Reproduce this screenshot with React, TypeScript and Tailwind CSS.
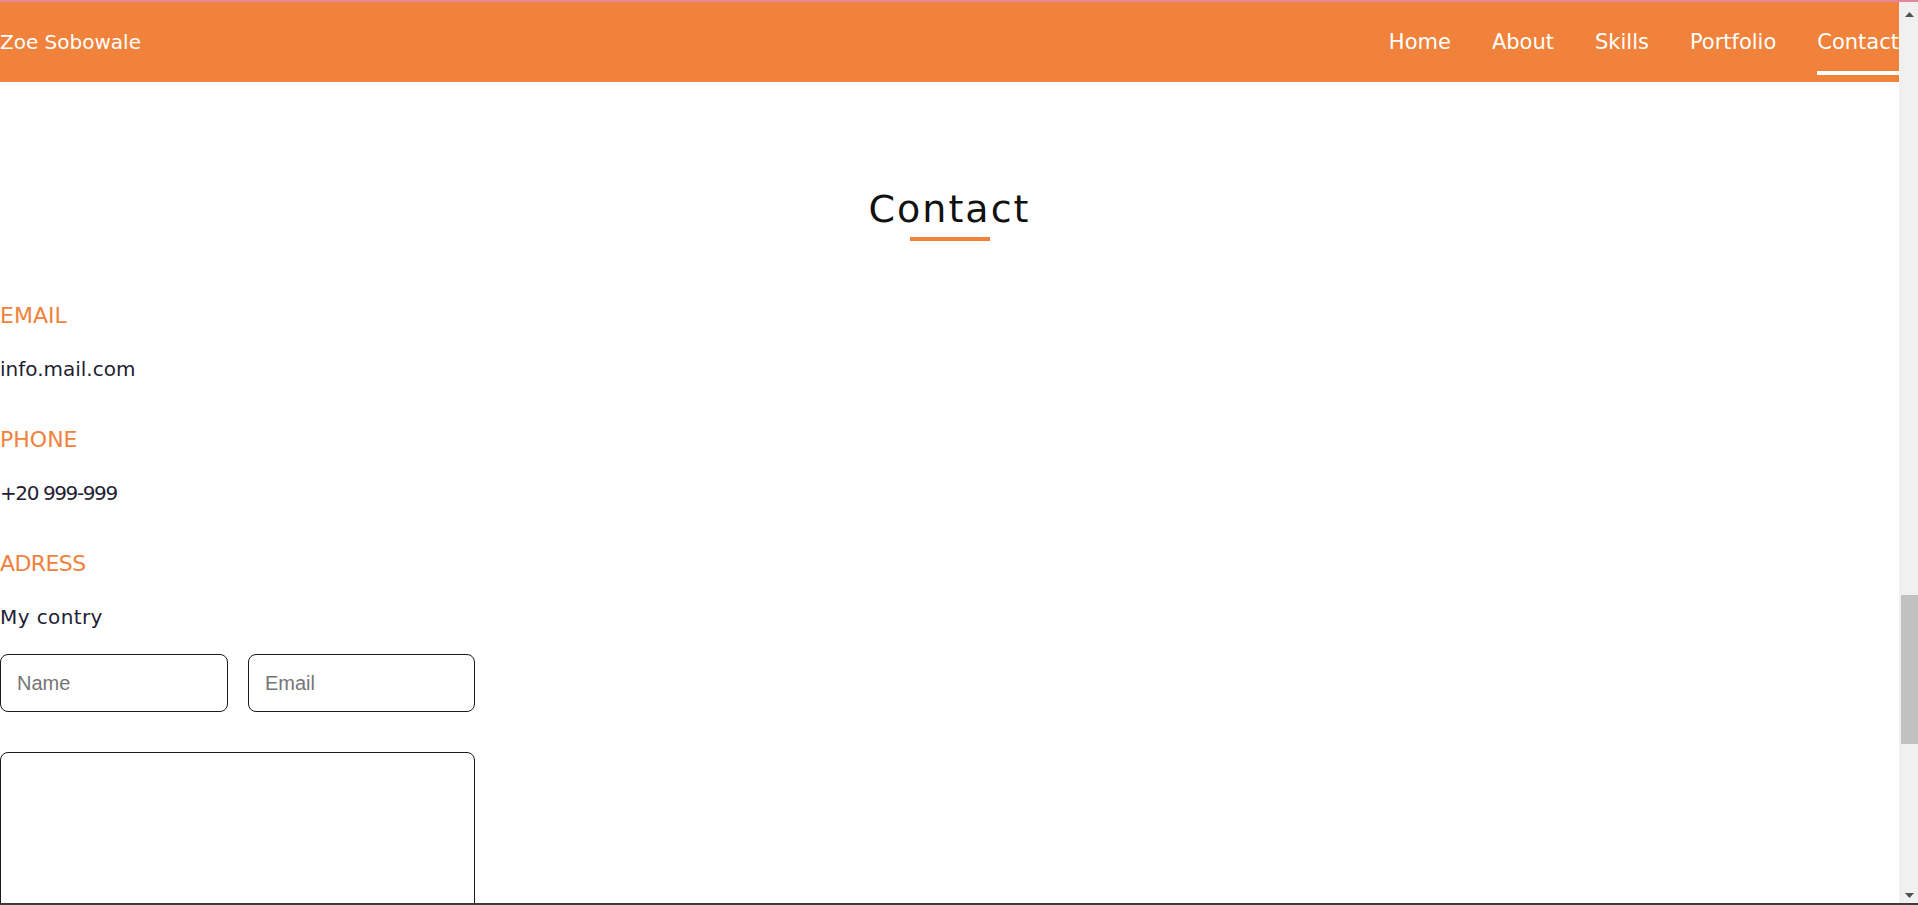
import React from "react";

const links = ["Home", "About", "Skills", "Portfolio", "Contact"];

const info = [
    { label: "EMAIL", value: "info.mail.com", labelClass: "", valueClass: "" },
    { label: "PHONE", value: "+20 999-999", labelClass: "", valueClass: "tracking-[-1.4px]" },
    { label: "ADRESS", value: "My contry", labelClass: "tracking-[-0.6px]", valueClass: "tracking-[0.4px]" },
];

const Navbar: React.FC = () => {
    return (
        <nav className="h-[80px] bg-[#f0823c] flex items-center justify-between text-white">
            <p className="text-[20px] leading-none">Zoe Sobowale</p>
            <ul className="flex h-full gap-[41px]">
                {links.map((link) => (
                    <li key={link} className="relative flex h-full items-center">
                        <a className="text-[21px] leading-none whitespace-nowrap" href={`#${link.toLowerCase()}`}>
                            {link}
                        </a>
                        {link === "Contact" && <span className="absolute left-0 right-0 bottom-[7px] h-[4px] bg-white" />}
                    </li>
                ))}
            </ul>
        </nav>
    );
};

const ScrollBar: React.FC = () => {
    return (
        <div className="w-[19px] bg-[#f0f0f0] flex flex-col">
            <div className="h-[15px] flex items-end pl-[6px]">
                <svg width="9" height="5" viewBox="0 0 9 5">
                    <path d="M4.5 0 L9 5 L0 5 Z" fill="#505050" />
                </svg>
            </div>
            <div className="flex-1 pt-[578px]">
                <div className="ml-[2px] w-[17px] h-[149px] bg-[#c1c1c1]" />
            </div>
            <div className="h-[10px] pl-[6px]">
                <svg width="9" height="5" viewBox="0 0 9 5">
                    <path d="M0 0 L9 0 L4.5 5 Z" fill="#505050" />
                </svg>
            </div>
        </div>
    );
};

export default function App() {
    return (
        <div className="h-[905px] w-full overflow-hidden flex flex-col bg-white" style={{ fontFamily: '"DejaVu Sans", sans-serif' }}>
            <div className="h-[2px] bg-[#e7879a]" />
            <div className="flex flex-1 min-h-0">
                <div className="flex-1 min-w-0 overflow-hidden">
                    <Navbar />

                    <section id="contact" className="w-full">
                        <h2 className="mt-[108px] text-center text-[38px] leading-none tracking-[2px] text-[#111111]">Contact</h2>
                        <div className="mx-auto mt-[9px] h-[4px] w-[80px] bg-[#f0823c]" />

                        <div className="mt-[64px] flex flex-col">
                            {info.map((item, i) => (
                                <div key={item.label} className={i === 0 ? "" : "mt-[50px]"}>
                                    <h6 className={`text-[22px] leading-none text-[#f0823c] ${item.labelClass}`}>{item.label}</h6>
                                    <p className={`mt-[32px] text-[20px] leading-none text-[#1f2233] ${item.valueClass}`}>{item.value}</p>
                                </div>
                            ))}
                        </div>

                        <form className="mt-[27px] w-[474px]" style={{ fontFamily: '"Liberation Sans", Arial, sans-serif' }}>
                            <div className="flex gap-[20px]">
                                <input
                                    type="text"
                                    placeholder="Name"
                                    className="w-[228px] h-[58px] rounded-[8px] border border-[#1a1a1a] pl-[16px] text-[20px] placeholder:text-[#757575] outline-none"
                                />
                                <input
                                    type="email"
                                    placeholder="Email"
                                    className="w-[227px] h-[58px] rounded-[8px] border border-[#1a1a1a] pl-[16px] text-[20px] placeholder:text-[#757575] outline-none"
                                />
                            </div>
                            <textarea className="mt-[40px] block w-[475px] h-[220px] rounded-[8px] border border-[#1a1a1a] resize-none outline-none" />
                        </form>
                    </section>
                </div>
                <ScrollBar />
            </div>
            <div className="h-[2px] bg-[#3c3c3c]" />
        </div>
    );
}
